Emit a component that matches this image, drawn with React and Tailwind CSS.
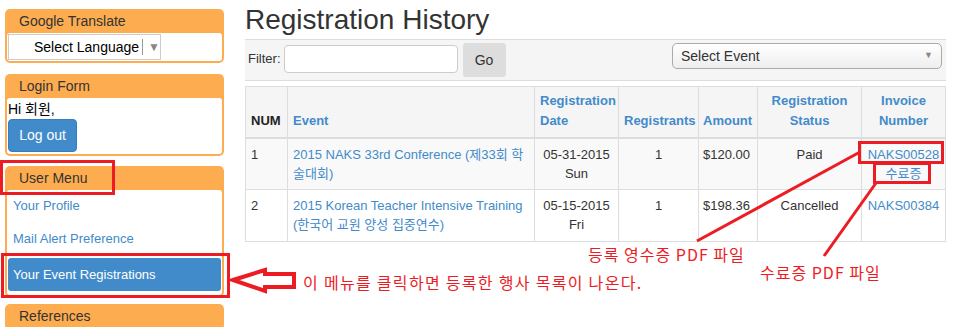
import React from 'react';

const font = { fontFamily: '"Liberation Sans", Arial, "Noto Sans CJK KR", sans-serif' };
const krFont = { fontFamily: '"Noto Sans CJK KR", sans-serif' };

const Panel = ({ title, children }) => (
  <div className="rounded-[5px] bg-[#fdad4f] px-[2px] pb-[2px]">
    <div className="h-[24px] pl-[12px] text-[14px] leading-[24px] text-[#333]">{title}</div>
    {children && <div className="rounded-[3px] bg-white">{children}</div>}
  </div>
);

const Sidebar = () => (
  <div className="ml-[5px] flex w-[219px] shrink-0 flex-col pt-[9px]">
    <Panel title="Google Translate">
      <div className="h-[28px] pl-[1px] pt-[1px]">
        <div className="flex h-[26px] w-[153px] items-center whitespace-nowrap border border-[#ccc] bg-white text-[14px] text-black">
          <span className="ml-[25px]">Select Language</span>
          <span className="ml-[3px] h-[16px] border-l border-[#999]"></span>
          <span className="ml-[5px] text-[12px] text-[#888]">▼</span>
        </div>
      </div>
    </Panel>
    <div className="mt-[11px]">
      <Panel title="Login Form">
        <div className="h-[56px] pl-[1px]">
          <div className="text-[14px] leading-[22px] text-black">Hi 회원,</div>
          <button className="mt-[-1px] h-[33px] w-[69px] rounded-[4px] border border-[#357ebd] bg-[#428bca] text-[14px] text-white">
            Log out
          </button>
        </div>
      </Panel>
    </div>
    <div className="mt-[10px]">
      <Panel title="User Menu">
        <div className="flex h-[105px] flex-col px-[1px] text-[13px]">
          <div className="h-[32px] pl-[5px] leading-[32px] text-[#428bca]">Your Profile</div>
          <div className="h-[34px] pl-[5px] leading-[34px] text-[#428bca]">Mail Alert Preference</div>
          <div className="mt-[2px] h-[33px] rounded-[3px] bg-[#428bca] pl-[5px] leading-[33px] text-white">Your Event Registrations</div>
        </div>
      </Panel>
    </div>
    <div className="mt-[7px]">
      <Panel title="References" />
    </div>
  </div>
);

const HeadCell = ({ children, className = '' }) => (
  <th className={`border border-[#ddd] border-b-2 px-[5px] pb-[6px] align-bottom text-[13px] font-bold leading-[20px] text-[#428bca] ${className}`}>
    {children}
  </th>
);

const Cell = ({ children, className = '' }) => (
  <td className={`border border-[#ddd] px-[5px] pt-[6px] pb-[6px] align-top text-[13px] leading-[19px] text-[#333] ${className}`}>
    {children}
  </td>
);

const Main = () => (
  <div className="ml-[21px] w-[701px]">
    <h1 className="pt-[4px] text-[28px] leading-[32px] text-[#333]">Registration History</h1>
    <div className="mt-[3px] flex h-[42px] items-start border-y border-[#ddd] bg-[#f5f5f5] pr-[4px] pt-[3px]">
      <span className="ml-[3px] mt-[6px] text-[13px] text-[#333]">Filter:</span>
      <input className="ml-[3px] mt-[2px] h-[28px] w-[174px] rounded-[4px] border border-[#ccc] bg-white" />
      <button className="ml-[5px] h-[34px] w-[43px] rounded-[3px] bg-[#ddd] text-[14px] text-[#333]">Go</button>
      <div className="ml-auto flex h-[26px] w-[270px] items-center justify-between rounded-[5px] border border-[#aaa] bg-gradient-to-b from-white to-[#eee] px-[8px] text-[14px] text-[#333]">
        <span>Select Event</span>
        <span className="text-[9px] text-[#888]">▼</span>
      </div>
    </div>
    <table className="mt-[5px] w-[700px] table-fixed border-collapse border border-[#ddd]">
      <colgroup>
        <col className="w-[42px]" />
        <col className="w-[247px]" />
        <col className="w-[84px]" />
        <col className="w-[80px]" />
        <col className="w-[59px]" />
        <col className="w-[104px]" />
        <col className="w-[84px]" />
      </colgroup>
      <thead>
        <tr className="h-[51px] bg-[#f5f5f5]">
          <HeadCell className="text-left !text-[#222]">NUM</HeadCell>
          <HeadCell className="text-left">Event</HeadCell>
          <HeadCell className="text-left">Registration Date</HeadCell>
          <HeadCell className="text-center">Registrants</HeadCell>
          <HeadCell className="text-left !px-[4px]">Amount</HeadCell>
          <HeadCell className="text-center">Registration Status</HeadCell>
          <HeadCell className="text-center">Invoice Number</HeadCell>
        </tr>
      </thead>
      <tbody>
        <tr className="h-[51px] bg-[#f9f9f9]">
          <Cell>1</Cell>
          <Cell className="!text-[#428bca]">2015 NAKS 33rd Conference (제33회 학술대회)</Cell>
          <Cell className="text-center">05-31-2015 Sun</Cell>
          <Cell className="text-center">1</Cell>
          <Cell className="!px-[4px]">$120.00</Cell>
          <Cell className="text-center">Paid</Cell>
          <Cell className="text-center !text-[#428bca]">
            <div>NAKS00528</div>
            <div>수료증</div>
          </Cell>
        </tr>
        <tr className="h-[52px] bg-white">
          <Cell>2</Cell>
          <Cell className="!text-[#428bca]">2015 Korean Teacher Intensive Training (한국어 교원 양성 집중연수)</Cell>
          <Cell className="text-center">05-15-2015 Fri</Cell>
          <Cell className="text-center">1</Cell>
          <Cell className="!px-[4px]">$198.36</Cell>
          <Cell className="text-center">Cancelled</Cell>
          <Cell className="text-center !text-[#428bca]">NAKS00384</Cell>
        </tr>
      </tbody>
    </table>
  </div>
);

const Annotations = () => (
  <>
    <svg className="pointer-events-none absolute left-0 top-0" width="956" height="327">
      <g fill="none" stroke="#ed1c24" strokeWidth="3">
        <rect x="1.5" y="161.5" width="112" height="32" />
        <rect x="2.5" y="254.5" width="226" height="42" />
        <rect x="859.5" y="142.5" width="83" height="20" />
        <rect x="874.5" y="163.5" width="55" height="19" />
        <line x1="860" y1="152" x2="697" y2="241" />
        <line x1="876" y1="183" x2="824" y2="256" />
        <polygon points="233,280 265,270 265,274 294,274 294,287 265,287 265,291" strokeWidth="4" strokeLinejoin="miter" />
      </g>
    </svg>
    <div className="absolute left-[588px] top-[243px] text-[16px] leading-[22px] tracking-[1px] text-[#ed1c24]" style={krFont}>
      등록 영수증 PDF 파일
    </div>
    <div className="absolute left-[760px] top-[261px] text-[16px] leading-[22px] tracking-[1px] text-[#ed1c24]" style={krFont}>
      수료증 PDF 파일
    </div>
    <div className="absolute left-[303px] top-[271px] text-[16px] leading-[22px] tracking-[1.3px] text-[#ed1c24]" style={krFont}>
      이 메뉴를 클릭하면 등록한 행사 목록이 나온다.
    </div>
  </>
);

export default function App() {
  return (
    <div className="relative h-[327px] w-[956px] overflow-hidden bg-white" style={font}>
      <div className="flex">
        <Sidebar />
        <Main />
      </div>
      <Annotations />
    </div>
  );
}
